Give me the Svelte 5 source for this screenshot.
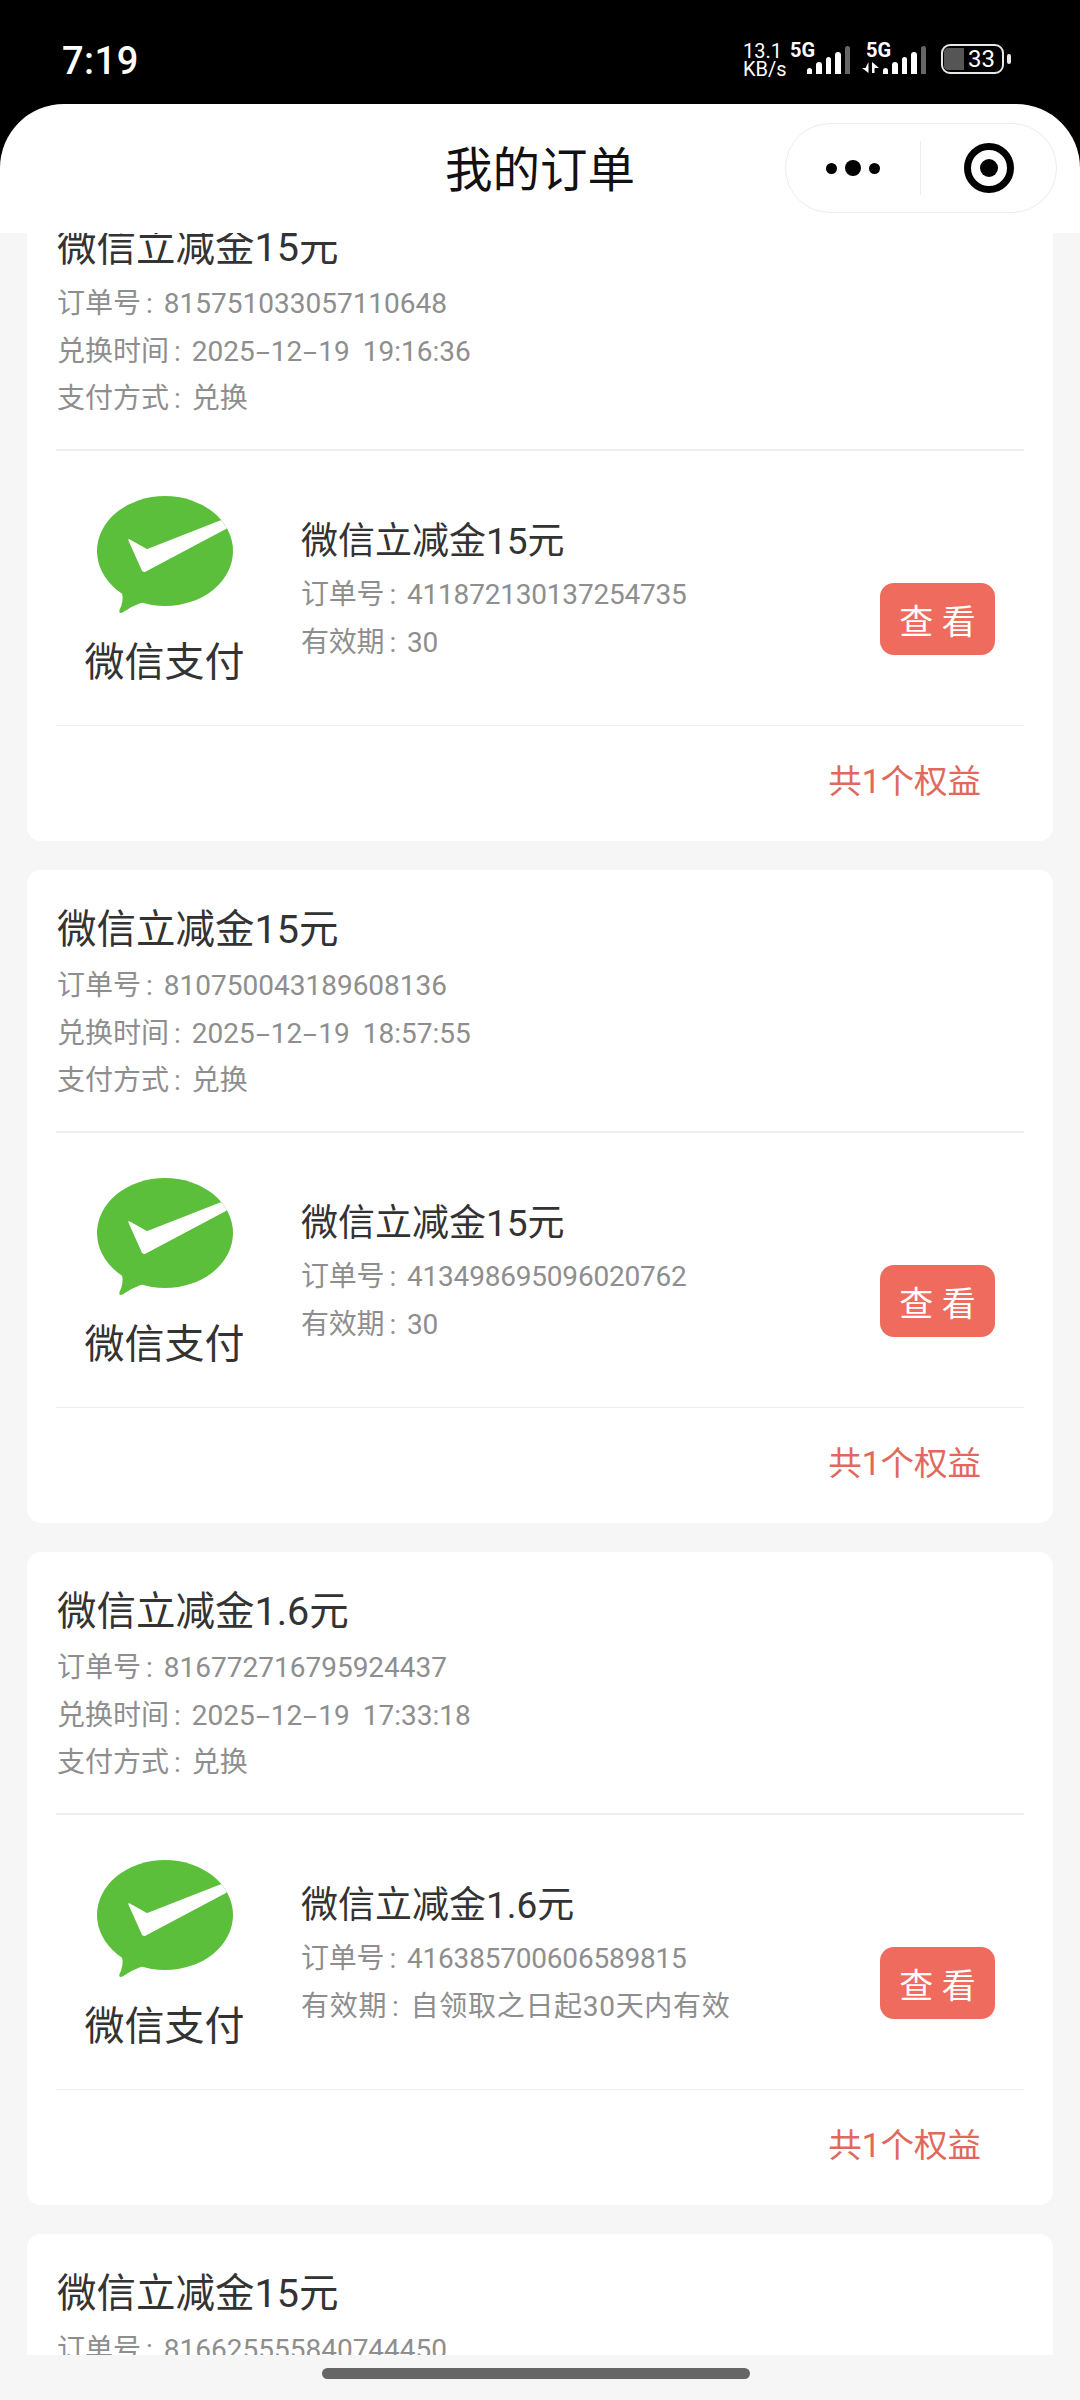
<script>
  const orders = [
    { name: '微信立减金15元', no: '815751033057110648', time: '2025-12-19 19:16:36', code: '411872130137254735', valid: '30' },
    { name: '微信立减金15元', no: '810750043189608136', time: '2025-12-19 18:57:55', code: '413498695096020762', valid: '30' },
    { name: '微信立减金1.6元', no: '816772716795924437', time: '2025-12-19 17:33:18', code: '416385700606589815', valid: '自领取之日起30天内有效' },
    { name: '微信立减金15元', no: '816625555840744450', time: '2025-12-19 17:20:41', code: '415530218846120937', valid: '30' },
  ];
  const bars = [6, 12, 17, 22, 28];
</script>

{#snippet row(label, value, wide = false)}
  <p class:wide><span class="label">{label}<em>:</em></span>{value}</p>
{/snippet}

{#snippet signal()}
  <div class="bars">
    {#each bars as h, i}
      <i class:off={i === 4} style="height:{h}px"></i>
    {/each}
  </div>
{/snippet}

<div class="phone">
  <div class="status">
    <span class="clock">7:19</span>
    <div class="indicators">
      <div class="speed"><span>13.1</span><span>KB/s</span></div>
      <div class="sim">
        <span class="gen">5G</span>
        {@render signal()}
      </div>
      <div class="sim second">
        <span class="gen">5G</span>
        <svg class="arrows" width="17" height="11" viewBox="0 0 17 11"><path d="M6.5 0v11L0 6h3.5zM10 0v11h2.500V6H17z" fill="#fff" /></svg>
        {@render signal()}
      </div>
      <div class="battery">
        <div class="cell"><b></b><span>33</span></div>
        <i class="nub"></i>
      </div>
    </div>
  </div>

  <div class="nav-back">
    <header class="nav">
      <h1>我的订单</h1>
      <div class="capsule">
        <div class="dots"><i></i><i class="big"></i><i></i></div>
        <span class="split"></span>
        <div class="target"><i></i></div>
      </div>
    </header>
  </div>

  <main class="scroll">
    <div class="list">
      {#each orders as o}
        <section class="card">
          <div class="head">
            <h2>{o.name}</h2>
            {@render row('订单号', o.no)}
            <p class="time">
              <span class="label">兑换时间<em>:</em></span>{#each o.time.split('-') as part, i}{#if i > 0}<span class="dash">-</span>{/if}{part}{/each}
            </p>
            {@render row('支付方式', '兑换')}
          </div>
          <div class="item">
            <div class="pay">
              <svg width="136" height="118" viewBox="0 0 136 118">
                <path d="M25 97 Q27 105 22.5 114 Q21.5 118 25.5 116.5 Q35 110 46 106 Z" fill="#5cbf3b" />
                <ellipse cx="68" cy="55" rx="68" ry="55" fill="#5cbf3b" />
                <path d="M32 44 L50 54 L124 25 L129 32 L48 75 Q46 76 45 73 Z" fill="#fff" stroke="#fff" stroke-width="1.5" stroke-linejoin="round" />
              </svg>
              <span>微信支付</span>
            </div>
            <div class="info">
              <h3>{o.name}</h3>
              {@render row('订单号', o.code)}
              {@render row('有效期', o.valid, o.valid.length > 2)}
            </div>
            <button type="button" class="view">查 看</button>
          </div>
          <div class="total">共1个权益</div>
        </section>
      {/each}
    </div>
  </main>

  <footer class="home"><i></i></footer>
</div>

<style>
  :global(body) { margin: 0; background: #f6f6f6; }
  .phone {
    height: 2400px; display: flex; flex-direction: column; overflow: hidden;
    background: #f6f6f6; color: #333;
    font-family: "Roboto", "Noto Sans CJK SC", sans-serif;
  }
  .status { height: 104px; flex: none; background: #000; color: #fff; display: flex; justify-content: space-between; padding: 0 69px 0 62px; box-sizing: border-box; }
  .clock { font-size: 38px; font-weight: 500; line-height: 38px; margin-top: 42px; letter-spacing: 0.5px; }
  .indicators { display: flex; align-items: flex-start; margin-top: 42px; }
  .speed { display: flex; flex-direction: column; font-size: 20px; line-height: 18px; width: 47px; }
  .sim { position: relative; display: flex; height: 32px; width: 60px; }
  .sim.second { margin-left: 16px; }
  .gen { font-size: 20px; line-height: 17px; font-weight: 700; }
  .bars { position: absolute; right: 0; bottom: 0; display: flex; align-items: flex-end; gap: 4px; }
  .bars i { display: block; width: 5.5px; border-radius: 3px 3px 0 0; background: #fff; }
  .bars i.off { background: #666; }
  .arrows { position: absolute; left: -4px; bottom: 1px; }
  .battery { display: flex; align-items: center; margin-left: 15px; margin-top: 2px; }
  .cell { position: relative; width: 63px; height: 30px; box-sizing: border-box; border: 2.5px solid #e8e8e8; border-radius: 9px; display: flex; align-items: center; justify-content: center; padding-left: 18px; }
  .cell b { position: absolute; left: 1px; top: 2px; bottom: 2px; width: 20px; background: #555; border-radius: 4px 0 0 4px; }
  .cell span { position: relative; font-size: 24px; line-height: 24px; }
  .nub { display: block; width: 4px; height: 10px; margin-left: 3px; background: #e8e8e8; border-radius: 2px; }

  .nav-back { flex: none; background: #000; position: relative; z-index: 1; }
  .nav { height: 129px; background: #fff; border-radius: 64px 64px 0 0; position: relative; display: flex; justify-content: center; padding-top: 35px; box-sizing: border-box; }
  h1 { margin: 0; font-size: 47.5px; line-height: 64px; font-weight: 400; color: #111; }
  .capsule { position: absolute; right: 23px; top: 19px; width: 272px; height: 90px; box-sizing: border-box; border: 1px solid #ececec; border-radius: 45px; display: flex; align-items: center; }
  .dots { width: 134px; display: flex; justify-content: center; align-items: center; gap: 8px; }
  .dots i { display: block; width: 11px; height: 11px; border-radius: 50%; background: #000; }
  .dots i.big { width: 16px; height: 16px; }
  .split { width: 1px; height: 54px; background: #eee; }
  .target { flex: 1; display: flex; align-items: center; justify-content: center; }
  .target i { display: flex; width: 50px; height: 50px; box-sizing: border-box; border: 7px solid #000; border-radius: 50%; align-items: center; justify-content: center; }
  .target i::after { content: ""; width: 18px; height: 18px; border-radius: 50%; background: #000; }

  .scroll { flex: 1; overflow: hidden; min-height: 0; }
  .list { margin-top: -45px; padding: 0 27px; display: flex; flex-direction: column; gap: 29px; }
  .card { height: 653px; flex: none; box-sizing: border-box; padding: 0 29px; background: #fff; border-radius: 14px; }
  .head { height: 263px; box-sizing: border-box; padding: 36px 0 0 1px; border-bottom: 2px solid #eee; }
  h2 { margin: 0 0 8px; font-size: 39.5px; line-height: 48px; font-weight: 400; color: #333; }
  p { margin: 0; font-size: 28px; line-height: 47.5px; color: #8e8e8e; }
  .label { margin-right: 11px; }
  .label em { font-style: normal; margin-left: 5px; }
  .dash { display: inline-block; width: 16px; text-align: center; transform: scaleX(1.8); }
  .time { word-spacing: 6px; }
  .item { height: 275px; box-sizing: border-box; display: flex; align-items: flex-start; border-bottom: 1px solid #eee; }
  .pay { width: 217px; flex: none; margin-right: 28px; padding-top: 45px; display: flex; flex-direction: column; align-items: center; }
  .pay span { font-size: 40px; line-height: 56px; margin-top: 21px; color: #333; }
  .info { flex: 1; min-width: 0; padding-top: 67px; }
  .info p { letter-spacing: -0.2px; }
  .info p.wide { letter-spacing: 0.7px; }
  h3 { margin: 0 0 5px; font-size: 37px; line-height: 48px; font-weight: 400; color: #333; }
  .view { flex: none; width: 115px; height: 72px; margin: 132px 29px 0 0; padding: 0; border: 0; border-radius: 14px; background: #ee6b5e; color: #fff; font: inherit; font-size: 34px; }
  .total { height: 115px; box-sizing: border-box; padding: 32px 43px 0 0; text-align: right; font-size: 33.5px; line-height: 48px; color: #e0685c; }

  .home { height: 45px; flex: none; padding: 13px 0 0 322px; box-sizing: border-box; background: #f6f6f6; }
  .home i { display: block; width: 428px; height: 11px; border-radius: 6px; background: #666; }
</style>
